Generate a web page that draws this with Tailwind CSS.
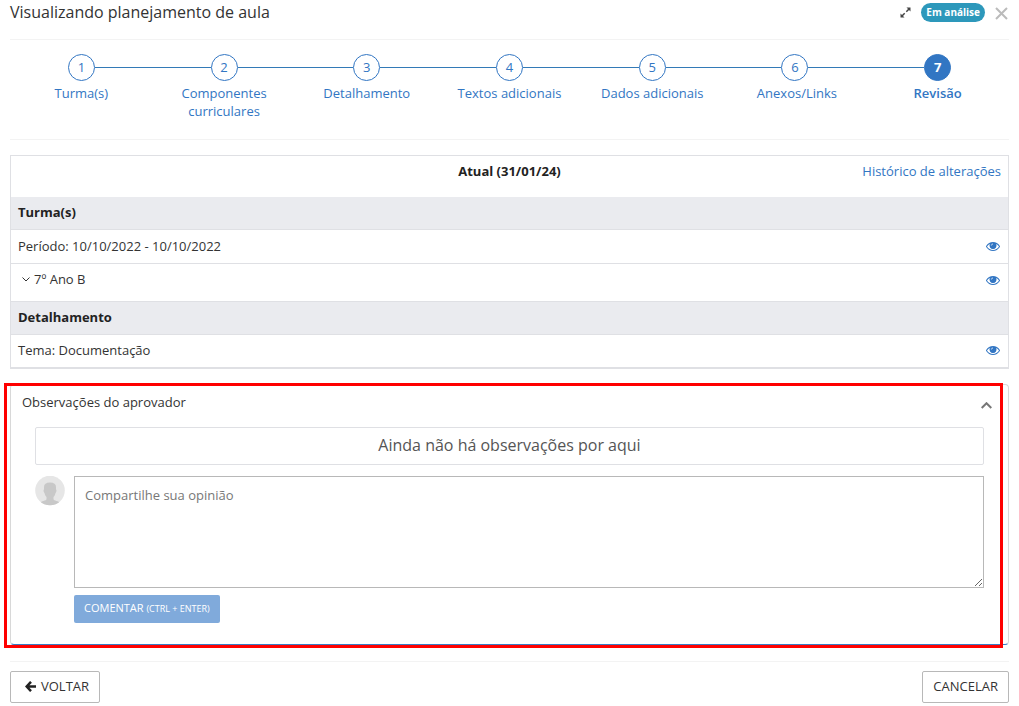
<!DOCTYPE html>
<html lang="pt-BR">
<head>
<meta charset="utf-8">
<meta name="viewport" content="width=device-width, initial-scale=1">
<title>Visualizando planejamento de aula</title>
<script src="https://cdn.jsdelivr.net/npm/@tailwindcss/browser@4"></script>
</head>
<body class="bg-white px-[10px] font-['Open_Sans',sans-serif] text-[13px] leading-[18px] text-[#333]">
<svg class="hidden" aria-hidden="true">
  <symbol id="eye" viewBox="0 0 1792 1792"><path fill="currentColor" d="M1664 960q-152-236-381-353 61 104 61 225 0 185-131.500 316.500t-316.500 131.500-316.500-131.500-131.500-316.500q0-121 61-225-229 117-381 353 133 205 333.500 326.500t434.500 121.500 434.500-121.500 333.500-326.500zm-720-384q0-20-14-34t-34-14q-125 0-214.500 89.500t-89.500 214.500q0 20 14 34t34 14 34-14 14-34q0-86 61-147t147-61q20 0 34-14t14-34zm848 384q0 34-20 69-140 230-376.500 368.500t-499.500 138.500-499.500-139-376.500-368q-20-35-20-69t20-69q140-229 376.500-368t499.500-139 499.500 139 376.500 368q20 35 20 69z"/><circle cx="896" cy="850" r="370" fill="currentColor"/><path d="M700 830q0-190 190-200" fill="none" stroke="#fff" stroke-width="90"/></symbol>
</svg>

<header class="flex h-10 items-start border-b border-[#f3f3f3]">
  <h1 class="grow text-[16px] leading-6">Visualizando planejamento de aula</h1>
  <div class="flex h-[25px] items-center">
    <button type="button" aria-label="Expandir" class="mr-[10px] text-[#444]">
      <svg class="size-[11px]" viewBox="0 0 11 11" fill="none" stroke="currentColor"><path fill="currentColor" stroke="none" d="M6.500 .5h4v4zM4.500 10.500h-4v-4z"/><path d="M9 2L6.300 4.700M2 9l2.700-2.700" stroke-width="1.500"/></svg>
    </button>
    <span class="rounded-full bg-[#2d98bb] px-[5px] text-[10px] leading-[19px] font-bold text-white">Em análise</span>
    <button type="button" aria-label="Fechar" class="ml-[10px] pt-[2px] pr-px text-[#bbb]">
      <svg class="size-[13px]" viewBox="0 0 13 13" fill="none" stroke="currentColor" stroke-width="2"><path d="M1 1l11 11M12 1L1 12"/></svg>
    </button>
  </div>
</header>

<nav aria-label="Etapas" class="border-b border-[#f3f3f3] pt-[14px] pb-[19px]">
  <ol class="grid grid-cols-7 text-center text-[#3276c3]">
    <li class="flex flex-col items-center"><div class="flex w-full items-center"><span class="flex-1"></span><span class="size-[27px] rounded-full border border-[#3276c3] leading-[24px]">1</span><span class="h-px flex-1 bg-[#337ab7]"></span></div><a href="#" class="mt-[3px]">Turma(s)</a></li>
    <li class="flex flex-col items-center"><div class="flex w-full items-center"><span class="h-px flex-1 bg-[#337ab7]"></span><span class="size-[27px] rounded-full border border-[#3276c3] leading-[24px]">2</span><span class="h-px flex-1 bg-[#337ab7]"></span></div><a href="#" class="mt-[3px] w-[100px]">Componentes curriculares</a></li>
    <li class="flex flex-col items-center"><div class="flex w-full items-center"><span class="h-px flex-1 bg-[#337ab7]"></span><span class="size-[27px] rounded-full border border-[#3276c3] leading-[24px]">3</span><span class="h-px flex-1 bg-[#337ab7]"></span></div><a href="#" class="mt-[3px]">Detalhamento</a></li>
    <li class="flex flex-col items-center"><div class="flex w-full items-center"><span class="h-px flex-1 bg-[#337ab7]"></span><span class="size-[27px] rounded-full border border-[#3276c3] leading-[24px]">4</span><span class="h-px flex-1 bg-[#337ab7]"></span></div><a href="#" class="mt-[3px]">Textos adicionais</a></li>
    <li class="flex flex-col items-center"><div class="flex w-full items-center"><span class="h-px flex-1 bg-[#337ab7]"></span><span class="size-[27px] rounded-full border border-[#3276c3] leading-[24px]">5</span><span class="h-px flex-1 bg-[#337ab7]"></span></div><a href="#" class="mt-[3px]">Dados adicionais</a></li>
    <li class="flex flex-col items-center"><div class="flex w-full items-center"><span class="h-px flex-1 bg-[#337ab7]"></span><span class="size-[27px] rounded-full border border-[#3276c3] leading-[24px]">6</span><span class="h-px flex-1 bg-[#337ab7]"></span></div><a href="#" class="mt-[3px] pl-1">Anexos/Links</a></li>
    <li class="flex flex-col items-center"><div class="flex w-full items-center"><span class="h-px flex-1 bg-[#337ab7]"></span><span class="size-[27px] rounded-full border border-[#3276c3] bg-[#3276c3] leading-[24px] font-bold text-white">7</span><span class="flex-1"></span></div><a href="#" aria-current="step" class="mt-[3px] font-semibold">Revisão</a></li>
  </ol>
</nav>

<main class="pt-[15px]">
  <table class="w-full border-separate border-spacing-0 border border-b-2 border-[#dfe0e4] text-left">
    <thead>
      <tr class="h-[41px] align-top">
        <td class="w-1/3"></td>
        <th class="w-1/3 pt-[6px] text-center font-bold text-[#222]">Atual (31/01/24)</th>
        <th class="w-1/3 pt-[6px] pr-[7px] text-right font-normal"><a href="#" class="text-[#3276c3]">Histórico de alterações</a></th>
      </tr>
    </thead>
    <tbody>
      <tr class="h-[33px] bg-[#eaebef]"><th colspan="3" class="border-b border-[#dfe0e4] px-[7px] pb-[2px] font-bold text-[#222]">Turma(s)</th></tr>
      <tr class="h-[34px]">
        <td colspan="2" class="border-b border-[#dfe0e4] px-[7px] pb-[2px]">Período: 10/10/2022 - 10/10/2022</td>
        <td class="border-b border-[#dfe0e4] pr-2 pb-[2px]"><button type="button" aria-label="Ver período" class="ml-auto block text-[#3276c3]"><svg class="size-[14px]"><use href="#eye"/></svg></button></td>
      </tr>
      <tr class="h-[38px]">
        <td colspan="2" class="border-b border-[#dfe0e4] px-[7px] pb-[8px]"><button type="button" class="flex items-center gap-1 pl-1"><svg class="size-2" viewBox="0 0 8 8" fill="none" stroke="currentColor"><path d="M.5 2.500L4 6l3.500-3.500"/></svg>7º Ano B</button></td>
        <td class="border-b border-[#dfe0e4] pr-2 pb-[6px]"><button type="button" aria-label="Ver turma" class="ml-auto block text-[#3276c3]"><svg class="size-[14px]"><use href="#eye"/></svg></button></td>
      </tr>
      <tr class="h-[33px] bg-[#eaebef]"><th colspan="3" class="border-b border-[#dfe0e4] px-[7px] pb-[2px] font-bold text-[#222]">Detalhamento</th></tr>
      <tr class="h-8">
        <td colspan="2" class="px-[7px] pb-[2px]">Tema: Documentação</td>
        <td class="pr-2 pb-[2px]"><button type="button" aria-label="Ver tema" class="ml-auto block text-[#3276c3]"><svg class="size-[14px]"><use href="#eye"/></svg></button></td>
      </tr>
    </tbody>
  </table>

  <section class="relative mt-[15px] rounded border border-[#d8d8d8] border-b-[#3a7cc4] pb-[21px]">
    <div class="pointer-events-none absolute -top-[2px] right-[5px] -bottom-[4px] -left-[7px] border-[3px] border-[#f00]"></div>
    <div class="flex items-center justify-between pt-2 pr-4 pl-[11px]">
      <h2>Observações do aprovador</h2>
      <button type="button" aria-label="Recolher" class="pt-[6px] text-[#777]"><svg class="h-[7px] w-[11px]" viewBox="0 0 11 7" fill="none" stroke="currentColor" stroke-width="2"><path d="M.7 6l4.800-4.800L10.300 6"/></svg></button>
    </div>
    <div class="px-6 pt-4">
      <p class="rounded-xs border border-[#dfe0e4] pt-[5px] pb-[7px] text-center text-[16px] leading-6 text-[#555]">Ainda não há observações por aqui</p>
      <form class="mt-[11px] flex items-start gap-[9px]">
        <svg class="size-[30px] shrink-0" viewBox="0 0 30 30"><clipPath id="disc"><circle cx="15" cy="14.500" r="14.800"/></clipPath><g clip-path="url(#disc)"><path fill="#e6e6e6" d="M0 0h30v30H0z"/><path fill="#c8c8c8" d="M9 11C9 8 11 6.500 15 6.500S21 8 21 11V13.500C21.800 13.500 21.500 16 20.500 17C20 19 19.500 20 18.500 21V23C18.500 25 24 24.500 25 27.500V30H5V27.500C6 24.500 11.500 25 11.500 23V21C10.500 20 10 19 9.500 17C8.500 16 8.200 13.500 9 13.500Z"/></g></svg>
        <div class="grow">
          <textarea aria-label="Comentário" placeholder="Compartilhe sua opinião" class="block h-28 w-full resize-y border border-[#b8b8b8] px-[10px] py-[9px] placeholder:text-[#777]"></textarea>
          <button type="button" class="mt-[7px] h-7 rounded-xs bg-[#80aadb] px-[10px] pb-[2px] text-[11px] text-white">COMENTAR <span class="text-[9px]">(CTRL + ENTER)</span></button>
        </div>
      </form>
    </div>
  </section>
</main>

<footer class="mt-4 flex justify-between border-t border-[#f3f3f3] pt-[9px]">
  <button type="button" class="flex h-8 items-center gap-[5px] rounded-xs border border-[#b8b8b8] pr-[10px] pb-[2px] pl-[14px]"><svg class="size-[11px] text-[#222]" viewBox="0 0 11 11" fill="none" stroke="currentColor" stroke-width="2.500"><path d="M6 .8L1.600 5.500 6 10.200M1.700 5.500H11"/></svg>VOLTAR</button>
  <button type="button" class="h-8 rounded-xs border border-[#b8b8b8] px-[10px] pb-[2px]">CANCELAR</button>
</footer>
</body>
</html>
